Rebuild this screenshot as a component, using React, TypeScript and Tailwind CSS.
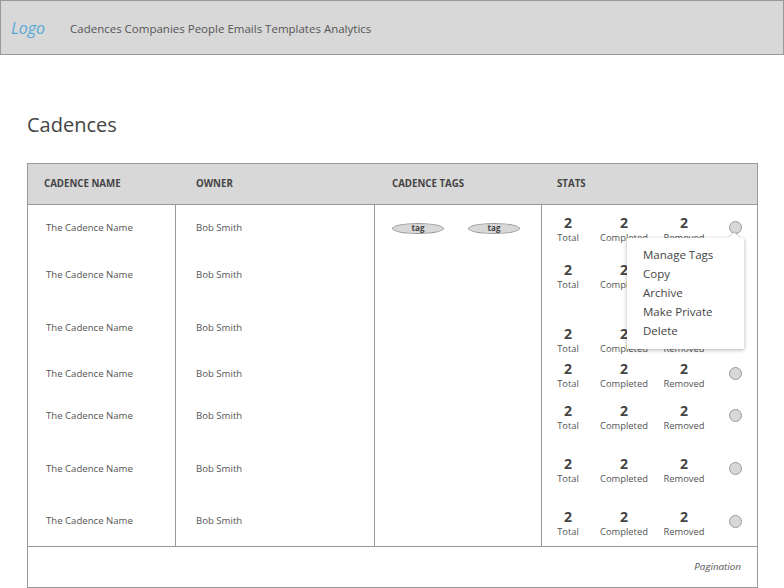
const rows = [
  { h: 46, tags: true, mt: 3 },
  { h: 48, tags: false, mt: 3 },
  { h: 58, tags: false, mt: 25 },
  { h: 34, tags: false, mt: 3 },
  { h: 50, tags: false, mt: 3 },
  { h: 56, tags: false, mt: 3 },
  { h: 49, tags: false, mt: 3 },
];

const menu = ["Manage Tags", "Copy", "Archive", "Make Private", "Delete"];

function Stat({ label, w }: { label: string; w: string }) {
  return (
    <div className={`flex flex-col items-center ${w}`}>
      <span className="text-[14px] font-bold leading-[16px] text-[#444]">2</span>
      <span className="text-[9.4px] leading-[13px] text-[#555]">{label}</span>
    </div>
  );
}

function Tag() {
  return (
    <span className="inline-flex h-[11px] w-[52px] items-center justify-center rounded-[50%] border border-[#999] bg-[#d8d8d8] text-[8px] font-bold leading-none text-[#444]">
      tag
    </span>
  );
}

export default function App() {
  return (
    <div className="min-h-[588px] w-[784px] bg-white" style={{ fontFamily: "'Open Sans', Lato, sans-serif" }}>
      <header className="flex h-[55px] items-center border border-[#999] bg-[#d8d8d8]">
        <span className="ml-[10px] text-[16px] italic text-[#56a9d8]">Logo</span>
        <nav className="ml-[25px] mt-[2px] text-[11.5px] text-[#555]">
          Cadences Companies People Emails Templates Analytics
        </nav>
      </header>

      <main className="px-[27px]">
        <h1 className="mt-[57px] text-[20px] leading-[25px] text-[#444]">Cadences</h1>

        <div className="mt-[26px] w-[731px] border border-[#999]">
          <div className="grid h-[41px] grid-cols-[148px_199px_167px_215px] items-center border-b border-[#999] bg-[#d8d8d8] text-[9.7px] font-bold uppercase text-[#444]">
            <span className="pl-[16px]">Cadence Name</span>
            <span className="pl-[20px]">Owner</span>
            <span className="pl-[17px]">Cadence Tags</span>
            <span className="pl-[15px]">Stats</span>
          </div>

          {rows.map((r, i) => (
            <div
              key={i}
              className="grid grid-cols-[148px_199px_167px_215px] text-[9.6px] text-[#555]"
              style={{ height: r.h }}
            >
              <div className="flex items-center border-r border-[#999] pl-[18px]">The Cadence Name</div>
              <div className="flex items-center border-r border-[#999] pl-[20px]">Bob Smith</div>
              <div className="flex items-center gap-[24px] border-r border-[#999] pl-[17px]">
                {r.tags && (
                  <>
                    <Tag />
                    <Tag />
                  </>
                )}
              </div>
              <div className="relative flex items-center">
                <div className="flex items-center" style={{ marginTop: r.mt }}>
                  <Stat label="Total" w="w-[52px]" />
                  <Stat label="Completed" w="w-[60px]" />
                  <Stat label="Removed" w="w-[60px]" />
                  <span className="mb-[4px] ml-[15px] h-[13px] w-[13px] rounded-full border border-[#999] bg-[#d8d8d8]" />
                </div>
                {i === 0 && (
                  <div className="absolute left-[85px] top-[33px] z-10 w-[117px] bg-white pb-[9px] pt-[7px] shadow-[0_1px_4px_rgba(0,0,0,0.3)]">
                    <span className="absolute right-[6px] top-[-4px] h-[8px] w-[8px] rotate-45 bg-white shadow-[-1px_-1px_2px_rgba(0,0,0,0.15)]" />
                    {menu.map((m) => (
                      <div key={m} className="relative h-[19px] pl-[16px] text-[11.5px] leading-[19px] text-[#444]">
                        {m}
                      </div>
                    ))}
                  </div>
                )}
              </div>
            </div>
          ))}

          <div className="flex h-[41px] items-center justify-end border-t border-[#999] pr-[16px] text-[9.8px] italic text-[#555]">
            Pagination
          </div>
        </div>
      </main>
    </div>
  );
}
